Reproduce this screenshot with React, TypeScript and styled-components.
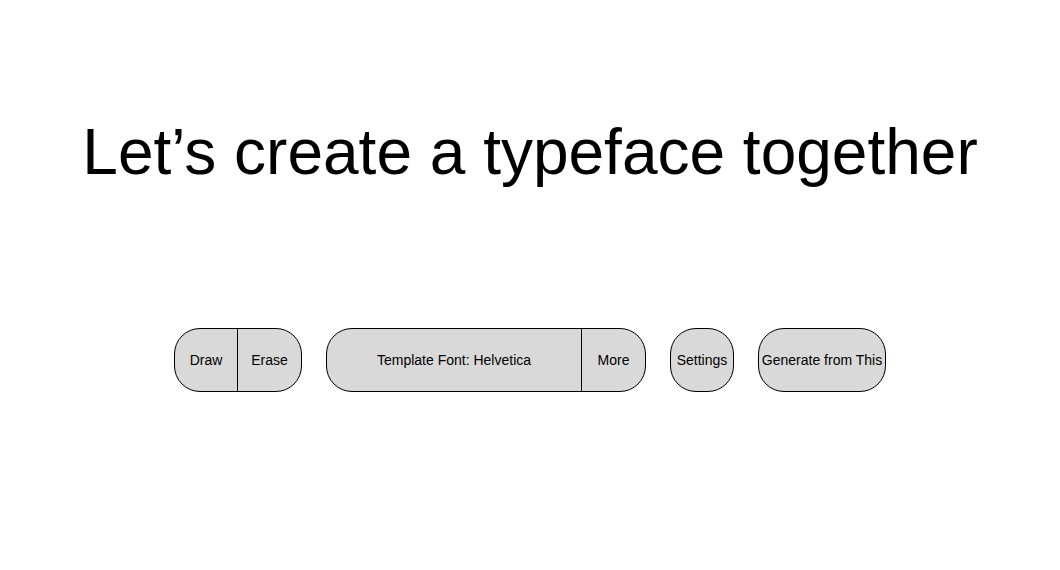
import React from "react";
import styled, { createGlobalStyle } from "styled-components";

const Global = createGlobalStyle`
  html, body { margin: 0; padding: 0; background: #fff; }
  body { font-family: "Liberation Sans", Arial, Helvetica, sans-serif; color: #000; }
  * { box-sizing: border-box; }
`;

const Page = styled.div`
  width: 1060px;
  height: 570px;
  display: flex;
  flex-direction: column;
  align-items: center;
  padding-top: 114px;
`;

const Title = styled.h1`
  margin: 0;
  font-weight: 400;
  font-size: 64px;
  line-height: 76px;
  letter-spacing: 0;
`;

const Toolbar = styled.div`
  display: flex;
  gap: 24px;
  margin-top: 138px;
`;

const Group = styled.div`
  display: flex;
  height: 64px;
  border: 1px solid #000;
  border-radius: 26px;
  background: #d9d9d9;
  overflow: hidden;
`;

const Segment = styled.button<{ $w: number; $divider?: boolean }>`
  width: ${(p) => p.$w}px;
  height: 100%;
  padding: 0;
  margin: 0;
  border: none;
  border-right: ${(p) => (p.$divider ? "1px solid #000" : "none")};
  background: transparent;
  font-family: "Liberation Sans", Arial, Helvetica, sans-serif;
  font-size: 14px;
  color: #000;
  display: flex;
  align-items: center;
  justify-content: center;
  white-space: nowrap;
  cursor: pointer;
`;

export default function App() {
  return (
    <>
      <Global />
      <Page>
        <Title>Let’s create a typeface together</Title>
        <Toolbar>
          <Group>
            <Segment $w={63} $divider>Draw</Segment>
            <Segment $w={63}>Erase</Segment>
          </Group>
          <Group>
            <Segment $w={255} $divider>Template Font: Helvetica</Segment>
            <Segment $w={63}>More</Segment>
          </Group>
          <Group>
            <Segment $w={62}>Settings</Segment>
          </Group>
          <Group>
            <Segment $w={126}>Generate from This</Segment>
          </Group>
        </Toolbar>
      </Page>
    </>
  );
}
